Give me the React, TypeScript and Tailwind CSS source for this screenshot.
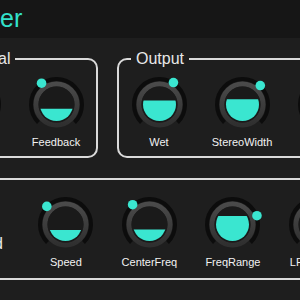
import { useId } from 'react'

const TEAL = '#3ae6d0'

function Knob({ value }: { value: number }) {
  const rawId = useId()
  const id = 'k' + rawId.replace(/[^a-zA-Z0-9]/g, '')
  const c = 27.5
  const r = 25.5
  const a = ((-135 + 270 * value) * Math.PI) / 180
  const dotX = c + 26 * Math.sin(a)
  const dotY = c - 26 * Math.cos(a)
  const fillTop = c + 16.5 - 33 * value
  const off = r * Math.SQRT1_2

  return (
    <svg width="55" height="55" viewBox="0 0 55 55" className="overflow-visible">
      <defs>
        <linearGradient id={id + 'g'} x1="0" y1="0" x2="0" y2="1">
          <stop offset="0" stopColor="#4a4a4a" />
          <stop offset="1" stopColor="#2f2f2f" />
        </linearGradient>
        <clipPath id={id + 'c'}>
          <rect x="0" y={fillTop} width="55" height="55" />
        </clipPath>
      </defs>
      {/* range track, open at the bottom */}
      <path
        d={`M ${c - off} ${c + off} A ${r} ${r} 0 1 1 ${c + off} ${c + off}`}
        fill="none"
        stroke="#0c0c0c"
        strokeWidth="4"
      />
      <circle cx={c} cy={c} r="20.5" fill="none" stroke={`url(#${id}g)`} strokeWidth="5" />
      <circle cx={c} cy={c} r="18" fill="#1a1a1a" />
      <circle cx={c} cy={c} r="16.5" fill={TEAL} clipPath={`url(#${id}c)`} />
      <circle cx={dotX} cy={dotY} r="4.8" fill={TEAL} />
    </svg>
  )
}

function KnobCell({ label, value }: { label: string; value: number }) {
  return (
    <div className="flex flex-col items-center w-[78px] shrink-0">
      <Knob value={value} />
      <span className="mt-[4px] text-[11px] leading-[13px] text-[#f2f2f2] whitespace-nowrap">{label}</span>
    </div>
  )
}

export default function App() {
  return (
    <div className="w-[300px] h-[300px] overflow-hidden bg-[#1e1e1e] font-['Liberation_Sans',Arial,sans-serif]">
      <div className="h-[38px] bg-[#161616] pt-[6px]">
        <h1 className="text-[25px] leading-[25px] text-[#33e2cb] whitespace-nowrap">er</h1>
      </div>

      <div className="flex items-start mt-[12px] ml-[-69px] gap-[19px]">
        <fieldset className="border-2 border-[#dadada] rounded-[10px] px-px pb-[7px] shrink-0">
          <legend className="ml-[59px] px-[5px] text-[16px] leading-[18px] text-[#e8e8e8]">al</legend>
          <div className="flex gap-[5px] pt-[9px]">
            <KnobCell label="Stages" value={0.5} />
            <KnobCell label="Feedback" value={0.37} />
          </div>
        </fieldset>

        <fieldset className="border-2 border-[#dadada] rounded-[10px] px-px pb-[7px] shrink-0">
          <legend className="ml-[11px] px-[5px] text-[16px] leading-[18px] text-[#e8e8e8]">Output</legend>
          <div className="flex gap-[5px] pt-[9px]">
            <KnobCell label="Wet" value={0.62} />
            <KnobCell label="StereoWidth" value={0.66} />
            <KnobCell label="Dry" value={0.5} />
          </div>
        </fieldset>
      </div>

      <div className="mt-[20px] border-y-2 border-[#dadada] flex items-start pt-[17px] pb-[9px]">
        <span className="ml-[-6px] mr-[24px] mt-[38px] text-[16px] leading-[18px] text-[#e8e8e8] shrink-0">d</span>
        <div className="flex gap-[5.5px]">
          <KnobCell label="Speed" value={0.33} />
          <KnobCell label="CenterFreq" value={0.35} />
          <KnobCell label="FreqRange" value={0.76} />
          <KnobCell label="LFOShape" value={0.5} />
        </div>
      </div>
    </div>
  )
}
